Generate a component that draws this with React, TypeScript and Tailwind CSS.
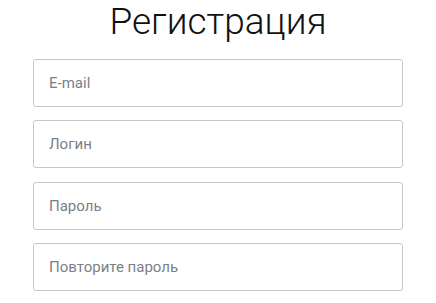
export default function App() {
  const fields = ["E-mail", "Логин", "Пароль", "Повторите пароль"];
  return (
    <div className="min-h-screen bg-white font-['Roboto',sans-serif]">
      <div className="mx-auto w-[370px]">
        <h1 className="text-center text-[37px] font-light leading-[44px] text-[#111]">Регистрация</h1>
        <form className="mt-[15px] flex flex-col gap-[13.33px]">
          {fields.map((f) => (
            <input
              key={f}
              placeholder={f}
              className="h-[48px] w-full rounded-[3px] border border-[#c8c8c8] px-[15px] text-[15px] text-[#333] placeholder:text-[#7a7f87] outline-none"
            />
          ))}
        </form>
      </div>
    </div>
  );
}
